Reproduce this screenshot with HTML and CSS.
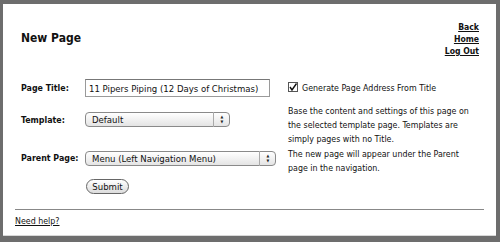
FILE: index.html
```html
<!DOCTYPE html>
<html lang="en">
<head>
<meta charset="UTF-8" />
<title>New Page</title>
<link rel="stylesheet" href="styles.css">
</head>
<body>
<div class="page">
  <div class="header">
    <h1>New Page</h1>
    <ul class="nav">
      <li><a href="#">Back</a></li>
      <li><a href="#">Home</a></li>
      <li><a href="#">Log Out</a></li>
    </ul>
  </div>

  <form class="form">
    <div class="row row-title">
      <label class="lbl" for="title">Page Title:</label>
      <div class="field"><input id="title" class="text" type="text" value="11 Pipers Piping (12 Days of Christmas)"></div>
      <div class="help"><span class="check">
        <svg width="10" height="10" viewBox="0 0 10 10"><rect x="0.5" y="0.5" width="9" height="9" fill="#fff" stroke="#555"/><path d="M2 5 L4 8 L8.5 1.5" fill="none" stroke="#111" stroke-width="1.4"/></svg>
      </span>Generate Page Address From Title</div>
    </div>

    <div class="row row-template">
      <label class="lbl" for="template">Template:</label>
      <div class="field">
        <div class="select short">
          <select id="template"><option>Default</option></select>
          <span class="arrows">&#9650;<br>&#9660;</span>
        </div>
      </div>
      <div class="help">Base the content and settings of this page on the selected template page. Templates are simply pages with no Title.</div>
    </div>

    <div class="row row-parent">
      <label class="lbl" for="parent">Parent Page:</label>
      <div class="field">
        <div class="select long">
          <select id="parent"><option>Menu (Left Navigation Menu)</option></select>
          <span class="arrows">&#9650;<br>&#9660;</span>
        </div>
      </div>
      <div class="help">The new page will appear under the Parent page in the navigation.</div>
    </div>

    <div class="row row-submit">
      <span class="lbl"></span>
      <div class="field"><button type="submit">Submit</button></div>
    </div>
  </form>

  <hr>
  <a class="helplink" href="#">Need help?</a>
</div>
</body>
</html>
```

FILE: styles.css
```css
html, body { margin: 0; height: 100%; }
body { background: #6d6d6d; padding: 4px 4px 5px 3px; box-sizing: border-box; font-family: "DejaVu Sans", sans-serif; font-stretch: condensed; font-size: 8.8px; color: #111; }
.page { background: #fff; height: 232px; box-sizing: border-box; padding: 16px 12px 0 12px; border-bottom: 1px solid #d8d8d8; }

.header { display: flex; justify-content: space-between; padding: 0 5px 0 6px; }
h1 { margin: 10px 0 0; font-size: 12px; font-weight: bold; line-height: 16px; }
.nav { list-style: none; margin: 0; padding: 1px 0 0; text-align: right; line-height: 12px; font-size: 8.6px; font-weight: bold; }
.nav a { color: #111; }

.form { padding-left: 6px; margin-top: 22px; }
.row { display: flex; align-items: flex-start; line-height: 14px; }
.lbl { width: 64px; font-weight: bold; flex: none; }
.field { width: 203px; flex: none; }
.help { width: 192px; }

.row-title .lbl, .row-title .help { margin-top: 2px; }
.row-template { margin-top: 7px; }
.row-template .lbl { margin-top: 9px; }
.row-template .field { margin-top: 8px; }
.row-parent { margin-top: 1px; }
.row-parent .lbl { margin-top: 4px; }
.row-parent .field { margin-top: 4px; }
.row-submit { margin-top: 4px; }

.text { width: 185px; height: 18px; box-sizing: border-box; border: 1px solid #9a9a9a; border-top-color: #777; padding: 0 3px; font: inherit; font-size: 9.5px; color: #111; }

.check { display: inline-block; vertical-align: -1px; margin-right: 4px; }
.check svg { display: block; }

.select { position: relative; }
.select select { appearance: none; -webkit-appearance: none; width: 100%; height: 15px; box-sizing: border-box; border: 1px solid #8a8a8a; border-radius: 4px; background: linear-gradient(#fff, #e4e4e4); font: inherit; font-size: 9.5px; padding: 0 6px; color: #111; }
.select.short { width: 145px; }
.select.long { width: 191px; }
.arrows { position: absolute; right: 0; top: 0; width: 17px; height: 15px; box-sizing: border-box; border-left: 1px solid #aaa; font-size: 4px; line-height: 5px; text-align: center; padding-top: 2px; color: #222; pointer-events: none; }

button { width: 43px; height: 15px; margin-left: 1px; box-sizing: border-box; border: 1px solid #666; border-radius: 8px; background: linear-gradient(#fff, #dcdcdc); font: inherit; font-size: 9.5px; padding: 0; color: #111; }

hr { border: 0; border-top: 1px solid #888; margin: 15px 0 0; }
.helplink { display: inline-block; margin-top: 6px; color: #111; }
```
